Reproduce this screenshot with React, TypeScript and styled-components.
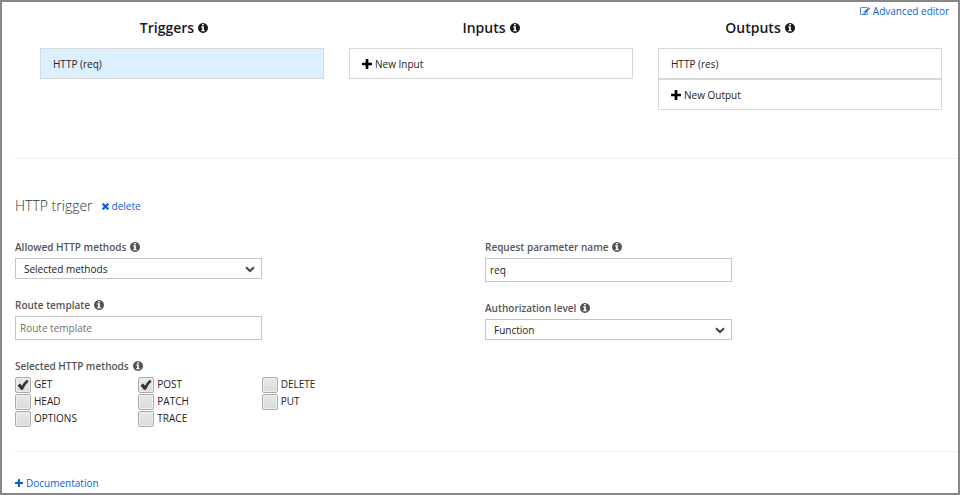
import React, { useId, useState } from 'react';
import styled, { createGlobalStyle, css } from 'styled-components';

const GlobalStyle = createGlobalStyle`
  *, *::before, *::after { box-sizing: border-box; }
  html, body, #root { height: 100%; }
  body {
    margin: 0;
    background: #fff;
    color: #222;
    font-family: "Open Sans", "Noto Sans", sans-serif;
    font-size: 10px;
    line-height: 14px;
  }
  button, input, select { font: inherit; color: inherit; margin: 0; }
`;

const paths = {
  info: 'M1152 1376v-160q0-14-9-23t-23-9h-96v-512q0-14-9-23t-23-9h-320q-14 0-23 9t-9 23v160q0 14 9 23t23 9h96v320h-96q-14 0-23 9t-9 23v160q0 14 9 23t23 9h448q14 0 23-9t9-23zm-128-896v-160q0-14-9-23t-23-9h-192q-14 0-23 9t-9 23v160q0 14 9 23t23 9h192q14 0 23-9t9-23zm640 416q0 209-103 385.5t-279.5 279.5-385.5 103-385.5-103-279.5-279.5-103-385.5 103-385.5 279.5-279.5 385.5-103 385.5 103 279.5 279.5 103 385.5z',
  plus: 'M1600 736v192q0 40-28 68t-68 28h-416v416q0 40-28 68t-68 28h-192q-40 0-68-28t-28-68v-416h-416q-40 0-68-28t-28-68v-192q0-40 28-68t68-28h416v-416q0-40 28-68t68-28h192q40 0 68 28t28 68v416h416q40 0 68 28t28 68z',
  times: 'M1490 1322q0 40-28 68l-136 136q-28 28-68 28t-68-28l-294-294-294 294q-28 28-68 28t-68-28l-136-136q-28-28-28-68t28-68l294-294-294-294q-28-28-28-68t28-68l136-136q28-28 68-28t68 28l294 294 294-294q28-28 68-28t68 28l136 136q28 28 28 68t-28 68l-294 294 294 294q28 28 28 68z',
  edit: 'M888 1184l116-116-152-152-116 116v56h96v96h56zm440-720q-16-16-33 1l-350 350q-17 17-1 33t33-1l350-350q17-17 1-33zm80 594v190q0 119-84.5 203.5t-203.5 84.5h-832q-119 0-203.5-84.5t-84.5-203.5v-832q0-119 84.5-203.5t203.5-84.5h832q63 0 117 25 15 7 18 23 3 17-9 29l-49 49q-14 14-32 8-23-6-45-6h-832q-66 0-113 47t-47 113v832q0 66 47 113t113 47h832q66 0 113-47t47-113v-126q0-13 9-22l64-64q15-15 35-7t20 29zm-96-738l288 288-672 672h-288v-288zm444 132l-92 92-288-288 92-92q28-28 68-28t68 28l152 152q28 28 28 68t-28 68z',
};

/* Visible ink of each glyph, so that an icon fills its own box. */
const boxes = {
  info: '128 128 1536 1536',
  plus: '192 128 1408 1408',
  times: '302 366 1188 1188',
  edit: '0 128 1792 1536',
};

const Glyph = styled.svg<{ $w: number; $h: number }>`
  width: ${(p) => p.$w}px;
  height: ${(p) => p.$h}px;
  flex: none;
  fill: currentColor;
`;

function Icon({ name, w, h = w }: { name: keyof typeof paths; w: number; h?: number }) {
  return (
    <Glyph $w={w} $h={h} viewBox={boxes[name]} aria-hidden="true">
      <path d={paths[name]} />
    </Glyph>
  );
}

const Frame = styled.main`
  min-height: 100%;
  border: 2px solid #888;
  display: flex;
  flex-direction: column;
`;

const linkStyle = css`
  display: inline-flex;
  align-items: center;
  gap: 3px;
  color: #0a60dc;
  text-decoration: none;
`;

const Link = styled.a`
  ${linkStyle}
`;

const DeleteButton = styled.button`
  ${linkStyle}
  padding: 0;
  border: 0;
  background: none;
  cursor: pointer;
`;

const TopBar = styled.header`
  display: flex;
  justify-content: flex-end;
  padding: 2px 9px 0;
`;

const Bindings = styled.section`
  display: grid;
  grid-template-columns: repeat(3, 1fr);
  gap: 25px;
  padding: 0 16px 48px 38px;
`;

const Column = styled.div`
  display: flex;
  flex-direction: column;
`;

const ColumnTitle = styled.h2<{ $inset: number }>`
  display: flex;
  align-items: center;
  justify-content: center;
  gap: 4px;
  margin: 0 0 10px;
  padding-right: ${(p) => p.$inset}px;
  color: #1a1a1a;
  font-size: 14px;
  font-weight: 600;
  line-height: 20px;
`;

const Card = styled.button<{ $active?: boolean }>`
  display: flex;
  align-items: center;
  gap: 3px;
  height: 31px;
  padding: 0 12px;
  border: 1px solid #d8d8d8;
  background: ${(p) => (p.$active ? '#dceffe' : '#fff')};
  text-align: left;
  cursor: pointer;

  svg { color: #000; }
`;

const Details = styled.section`
  margin-left: 13px;
  padding: 37px 3px 24px 0;
  border: 1px solid #f0f0f0;
  border-width: 1px 0;
`;

const TitleRow = styled.div`
  display: flex;
  align-items: center;
  gap: 9px;
  margin-bottom: 24px;
`;

const Title = styled.h1`
  margin: 0;
  color: #333;
  font-size: 14px;
  font-weight: 300;
  line-height: 20px;
`;

const Form = styled.form`
  display: grid;
  grid-template-columns: repeat(2, 1fr);
`;

const Fields = styled.div`
  display: flex;
  flex-direction: column;
  gap: 19px;
`;

const Field = styled.div`
  display: flex;
  flex-direction: column;
  gap: 4px;
  max-width: 247px;
`;

const labelStyle = css`
  display: flex;
  align-items: center;
  gap: 4px;
  padding: 0;
  color: #555;
  font-weight: 600;
`;

const Label = styled.label`
  ${labelStyle}
`;

const TextInput = styled.input`
  width: 100%;
  height: 24px;
  padding: 0 4px;
  border: 1px solid #c6c6c6;
  background: #fff;
  &::placeholder { color: #707070; opacity: 1; }
`;

const SelectWrap = styled.div`
  position: relative;
`;

const Select = styled.select`
  display: block;
  width: 100%;
  height: 21px;
  padding: 0 24px 0 8px;
  border: 1px solid #c6c6c6;
  border-radius: 0;
  background: #fff;
  appearance: none;
`;

const Chevron = styled.svg`
  position: absolute;
  right: 7px;
  top: 8px;
  width: 10px;
  height: 7px;
  fill: none;
  stroke: #444;
  stroke-width: 2;
  pointer-events: none;
`;

const MethodGroup = styled.fieldset`
  max-width: 370px;
  min-width: 0;
  margin: 0;
  padding: 0;
  border: 0;
`;

const Legend = styled.legend`
  ${labelStyle}
  margin-bottom: 4px;
`;

const Methods = styled.div`
  display: grid;
  grid-template-columns: repeat(3, 1fr);
  gap: 1px 0;
`;

const Method = styled.label`
  display: flex;
  align-items: flex-start;
  gap: 3px;
`;

const CheckWrap = styled.span`
  position: relative;
  display: flex;
`;

const Checkbox = styled.input`
  width: 16px;
  height: 16px;
  border: 1px solid #aaa;
  border-radius: 2px;
  background: linear-gradient(#e8e8e8, #dadada);
  box-shadow: inset 0 0 0 1px #eee;
  appearance: none;
  & + svg { display: none; }
  &:checked + svg { display: block; }
`;

const Tick = styled.svg`
  position: absolute;
  left: 2px;
  top: 2px;
  width: 12px;
  height: 12px;
  fill: #333;
  pointer-events: none;
`;

const Footer = styled.footer`
  padding: 24px 13px 2px;
`;

function SelectField({ label, options }: { label: string; options: string[] }) {
  const id = useId();
  return (
    <Field>
      <Label htmlFor={id}>{label}<Icon name="info" w={10} /></Label>
      <SelectWrap>
        <Select id={id} defaultValue={options[0]}>
          {options.map((o) => <option key={o}>{o}</option>)}
        </Select>
        <Chevron viewBox="0 0 10 7" aria-hidden="true"><path d="M1 1.2 5 5 9 1.2" /></Chevron>
      </SelectWrap>
    </Field>
  );
}

function TextField({ label, value = '', placeholder }: { label: string; value?: string; placeholder?: string }) {
  const id = useId();
  return (
    <Field>
      <Label htmlFor={id}>{label}<Icon name="info" w={10} /></Label>
      <TextInput id={id} type="text" defaultValue={value} placeholder={placeholder} />
    </Field>
  );
}

function BindingColumn({ title, inset = 0, children }: { title: string; inset?: number; children: React.ReactNode }) {
  return (
    <Column>
      <ColumnTitle $inset={inset}>{title}<Icon name="info" w={10} /></ColumnTitle>
      {children}
    </Column>
  );
}

const methods = ['GET', 'POST', 'DELETE', 'HEAD', 'PATCH', 'PUT', 'OPTIONS', 'TRACE'];

export default function App() {
  const [selected, setSelected] = useState<string[]>(['GET', 'POST']);
  const toggle = (m: string) =>
    setSelected((s) => (s.includes(m) ? s.filter((x) => x !== m) : [...s, m]));

  return (
    <>
      <GlobalStyle />
      <Frame>
        <TopBar>
          <Link href="#advanced"><Icon name="edit" w={10} h={9} />Advanced editor</Link>
        </TopBar>
        <Bindings>
          <BindingColumn title="Triggers" inset={16}>
            <Card type="button" $active>HTTP (req)</Card>
          </BindingColumn>
          <BindingColumn title="Inputs">
            <Card type="button"><Icon name="plus" w={10} />New Input</Card>
          </BindingColumn>
          <BindingColumn title="Outputs" inset={80}>
            <Card type="button">HTTP (res)</Card>
            <Card type="button"><Icon name="plus" w={10} />New Output</Card>
          </BindingColumn>
        </Bindings>
        <Details>
          <TitleRow>
            <Title>HTTP trigger</Title>
            <DeleteButton type="button"><Icon name="times" w={7} />delete</DeleteButton>
          </TitleRow>
          <Form>
            <Fields>
              <SelectField label="Allowed HTTP methods" options={['Selected methods', 'All methods']} />
              <TextField label="Route template" placeholder="Route template" />
              <MethodGroup>
                <Legend>Selected HTTP methods<Icon name="info" w={10} /></Legend>
                <Methods>
                  {methods.map((m) => (
                    <Method key={m}>
                      <CheckWrap>
                        <Checkbox type="checkbox" checked={selected.includes(m)} onChange={() => toggle(m)} />
                        <Tick viewBox="0 0 12 12" aria-hidden="true">
                          <path d="M.6 6.600 3 4.600l2 2.100Q7 3.200 9.800 .7L11.600 2.300Q8 5.800 5.900 10.800H4Z" />
                        </Tick>
                      </CheckWrap>
                      {m}
                    </Method>
                  ))}
                </Methods>
              </MethodGroup>
            </Fields>
            <Fields>
              <TextField label="Request parameter name" value="req" />
              <SelectField label="Authorization level" options={['Function', 'Anonymous', 'Admin']} />
            </Fields>
          </Form>
        </Details>
        <Footer>
          <Link href="#documentation"><Icon name="plus" w={8} />Documentation</Link>
        </Footer>
      </Frame>
    </>
  );
}
